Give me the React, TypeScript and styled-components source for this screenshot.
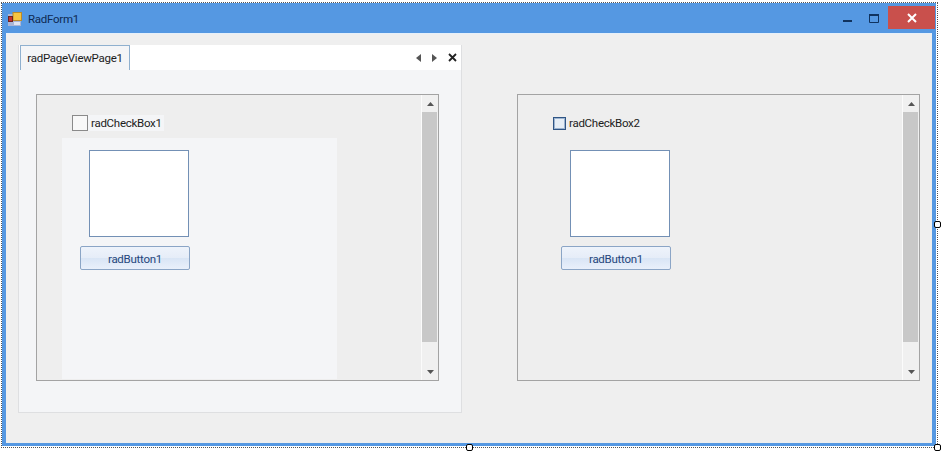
import React from "react";
import styled, { createGlobalStyle } from "styled-components";

const Global = createGlobalStyle`
  html, body { margin: 0; padding: 0; background: #fff; }
  body { font-family: "Roboto", "Open Sans", "Liberation Sans", sans-serif; font-size: 11.5px; letter-spacing: -0.27px; color: #1c1c1c; }
  #root { width: 941px; height: 451px; overflow: hidden; }
`;

const Page = styled.div`
  width: 941px;
  height: 451px;
  padding: 2px 0 0 1px;
  box-sizing: border-box;
`;

const Selection = styled.div`
  position: relative;
  width: 937px;
  height: 446px;
  box-sizing: border-box;
  border: 1px dotted #555;
`;

const Handle = styled.div<{ $x: number; $y: number }>`
  position: absolute;
  left: ${(p) => p.$x}px;
  top: ${(p) => p.$y}px;
  width: 5px;
  height: 5px;
  background: #fff;
  border: 1px solid #000;
  border-radius: 2px;
`;

const Form = styled.div`
  width: 934px;
  height: 443px;
  box-sizing: border-box;
  border: 4px solid #5598e2;
  border-top-width: 1px;
  border-bottom-width: 3px;
  display: flex;
  flex-direction: column;
  background: #efefef;
`;

const TitleBar = styled.div`
  height: 29px;
  flex: none;
  background: #5598e2;
  display: flex;
  align-items: center;
  color: #0f2a52;
  margin: 0 -4px;
  padding-left: 6px;
`;

const TitleText = styled.span`
  margin-left: 6px;
`;

const Spacer = styled.div`
  flex: 1;
`;

const WinButton = styled.div`
  width: 27px;
  height: 24px;
  display: flex;
  align-items: center;
  justify-content: center;
  color: #10335f;
`;

const MinButton = styled(WinButton)`
  margin-right: -1px;
`;

const CloseButton = styled(WinButton)`
  width: 47px;
  height: 23px;
  margin: -2px 1px 0 1px;
  background: #c9504c;
`;

const Content = styled.div`
  flex: 1;
  display: flex;
  align-items: flex-start;
  padding: 11px 0 0 12px;
  border-top: 1px solid #e6f0fa;
`;

const PageView = styled.div`
  width: 444px;
  height: 368px;
  flex: none;
  box-sizing: border-box;
  background: #f4f5f7;
  border: 1px solid #dedfe1;
  border-top: none;
  display: flex;
  flex-direction: column;
`;

const Strip = styled.div`
  height: 25px;
  flex: none;
  background: #fff;
  display: flex;
  align-items: stretch;
  padding-left: 1px;
`;

const Tab = styled.div`
  width: 110px;
  box-sizing: border-box;
  background: #f4f5f7;
  border: 1px solid #8fb0cf;
  border-bottom: none;
  display: flex;
  align-items: center;
  justify-content: center;
`;

const StripButtons = styled.div`
  margin-left: auto;
  display: flex;
  align-items: center;
  gap: 11px;
  padding-right: 4px;
`;

const PagePanel = styled.div`
  flex: 1;
  padding: 24px 0 0 17px;
`;

const ScrollBox = styled.div`
  width: 403px;
  height: 287px;
  flex: none;
  box-sizing: border-box;
  border: 1px solid #a3a3a3;
  background: #eeeeee;
  display: flex;
`;

const RightBox = styled(ScrollBox)`
  margin: 49px 0 0 55px;
`;

const Viewport = styled.div`
  flex: 1;
  min-width: 0;
`;

const CheckRow = styled.div<{ $left: number; $top: number }>`
  display: flex;
  align-items: center;
  height: 16px;
  margin: ${(p) => p.$top}px 0 0 ${(p) => p.$left}px;
`;

const PlainCheck = styled.div`
  width: 16px;
  height: 16px;
  box-sizing: border-box;
  border: 1px solid #8a8a8a;
  background: #f8f8f8;
`;

const BlueCheck = styled.div`
  width: 13px;
  height: 13px;
  box-sizing: border-box;
  border: 1px solid #2f5585;
  box-shadow: inset 0 0 0 1px #9db4d0;
  background: #e6eef6;
`;

const CheckLabel = styled.span<{ $bg?: string }>`
  background: ${(p) => p.$bg ?? "transparent"};
  padding: 0 2px 0 3px;
  line-height: 16px;
`;

const LightPanel = styled.div`
  width: 275px;
  height: 241px;
  margin: 7px 0 0 25px;
  background: #f4f5f7;
  padding: 12px 0 0 18px;
  box-sizing: border-box;
`;

const Group = styled.div`
  margin: 19px 0 0 43px;
`;

const PictureBox = styled.div`
  width: 100px;
  height: 87px;
  box-sizing: border-box;
  margin-left: 9px;
  background: #fff;
  border: 1px solid #7390b5;
`;

const RadButton = styled.div`
  width: 110px;
  height: 24px;
  margin-top: 9px;
  padding-top: 1px;
  box-sizing: border-box;
  border: 1px solid #8ba5c6;
  border-radius: 2px;
  background: linear-gradient(#eef3fb 0%, #e6edf8 48%, #d9e5f5 52%, #e9f0fb 100%);
  color: #26477c;
  display: flex;
  align-items: center;
  justify-content: center;
`;

const Scrollbar = styled.div`
  width: 17px;
  flex: none;
  background: #f0f0f0;
  border-left: 1px solid #fbfbfb;
  box-sizing: border-box;
  display: flex;
  flex-direction: column;
`;

const ArrowCell = styled.div`
  height: 17px;
  flex: none;
  display: flex;
  align-items: center;
  justify-content: center;
`;

const Thumb = styled.div`
  width: 15px;
  height: 230px;
  flex: none;
  background: #c8c8c8;
`;

const Track = styled.div`
  flex: 1;
`;

const Arrow = ({ dir }: { dir: "up" | "down" }) => (
  <svg width="7" height="4" viewBox="0 0 7 4">
    <path d={dir === "up" ? "M3.5 0 L7 4 H0 Z" : "M0 0 H7 L3.5 4 Z"} fill="#555" />
  </svg>
);

const Bar = () => (
  <Scrollbar>
    <ArrowCell><Arrow dir="up" /></ArrowCell>
    <Thumb />
    <Track />
    <ArrowCell><Arrow dir="down" /></ArrowCell>
  </Scrollbar>
);

const FormIcon = () => (
  <svg width="14" height="14" viewBox="0 0 14 14">
    <rect x="0" y="2" width="13" height="12" fill="#a9b6d6" />
    <rect x="5" y="0.5" width="8.5" height="8" fill="#f5c542" stroke="#b98a2a" />
    <rect x="0.5" y="4.5" width="4" height="5" fill="#c9302c" stroke="#6e2320" />
    <rect x="6" y="10" width="6" height="3" fill="#dfe5f2" />
  </svg>
);

export default function App() {
  return (
    <Page>
      <Global />
      <Selection>
        <Form>
          <TitleBar>
            <FormIcon />
            <TitleText>RadForm1</TitleText>
            <Spacer />
            <MinButton>
              <svg width="9" height="9" viewBox="0 0 9 9"><rect x="0" y="6" width="9" height="2" fill="currentColor" /></svg>
            </MinButton>
            <WinButton>
              <svg width="10" height="9" viewBox="0 0 10 9"><path d="M0.5 1.5 H9.5 V8.5 H0.5 Z" fill="none" stroke="currentColor" /><rect x="0" y="0" width="10" height="2" fill="currentColor" /></svg>
            </WinButton>
            <CloseButton>
              <svg width="10" height="10" viewBox="0 0 10 10"><path d="M1 1 L9 9 M9 1 L1 9" stroke="#fff" strokeWidth="2" /></svg>
            </CloseButton>
          </TitleBar>
          <Content>
            <PageView>
              <Strip>
                <Tab>radPageViewPage1</Tab>
                <StripButtons>
                  <svg width="5" height="8" viewBox="0 0 5 8"><path d="M5 0 V8 L0 4 Z" fill="#555" /></svg>
                  <svg width="5" height="8" viewBox="0 0 5 8"><path d="M0 0 V8 L5 4 Z" fill="#555" /></svg>
                  <svg width="9" height="9" viewBox="0 0 9 9"><path d="M1 1 L8 8 M8 1 L1 8" stroke="#222" strokeWidth="1.8" /></svg>
                </StripButtons>
              </Strip>
              <PagePanel>
                <ScrollBox>
                  <Viewport>
                    <CheckRow $left={35} $top={20}>
                      <PlainCheck />
                      <CheckLabel $bg="#f4f5f7">radCheckBox1</CheckLabel>
                    </CheckRow>
                    <LightPanel>
                      <PictureBox />
                      <RadButton>radButton1</RadButton>
                    </LightPanel>
                  </Viewport>
                  <Bar />
                </ScrollBox>
              </PagePanel>
            </PageView>
            <RightBox>
              <Viewport>
                <CheckRow $left={35} $top={20}>
                  <BlueCheck />
                  <CheckLabel>radCheckBox2</CheckLabel>
                </CheckRow>
                <Group>
                  <PictureBox />
                  <RadButton>radButton1</RadButton>
                </Group>
              </Viewport>
              <Bar />
            </RightBox>
          </Content>
        </Form>
        <Handle $x={464} $y={441} />
        <Handle $x={932} $y={218} />
        <Handle $x={932} $y={441} />
      </Selection>
    </Page>
  );
}
